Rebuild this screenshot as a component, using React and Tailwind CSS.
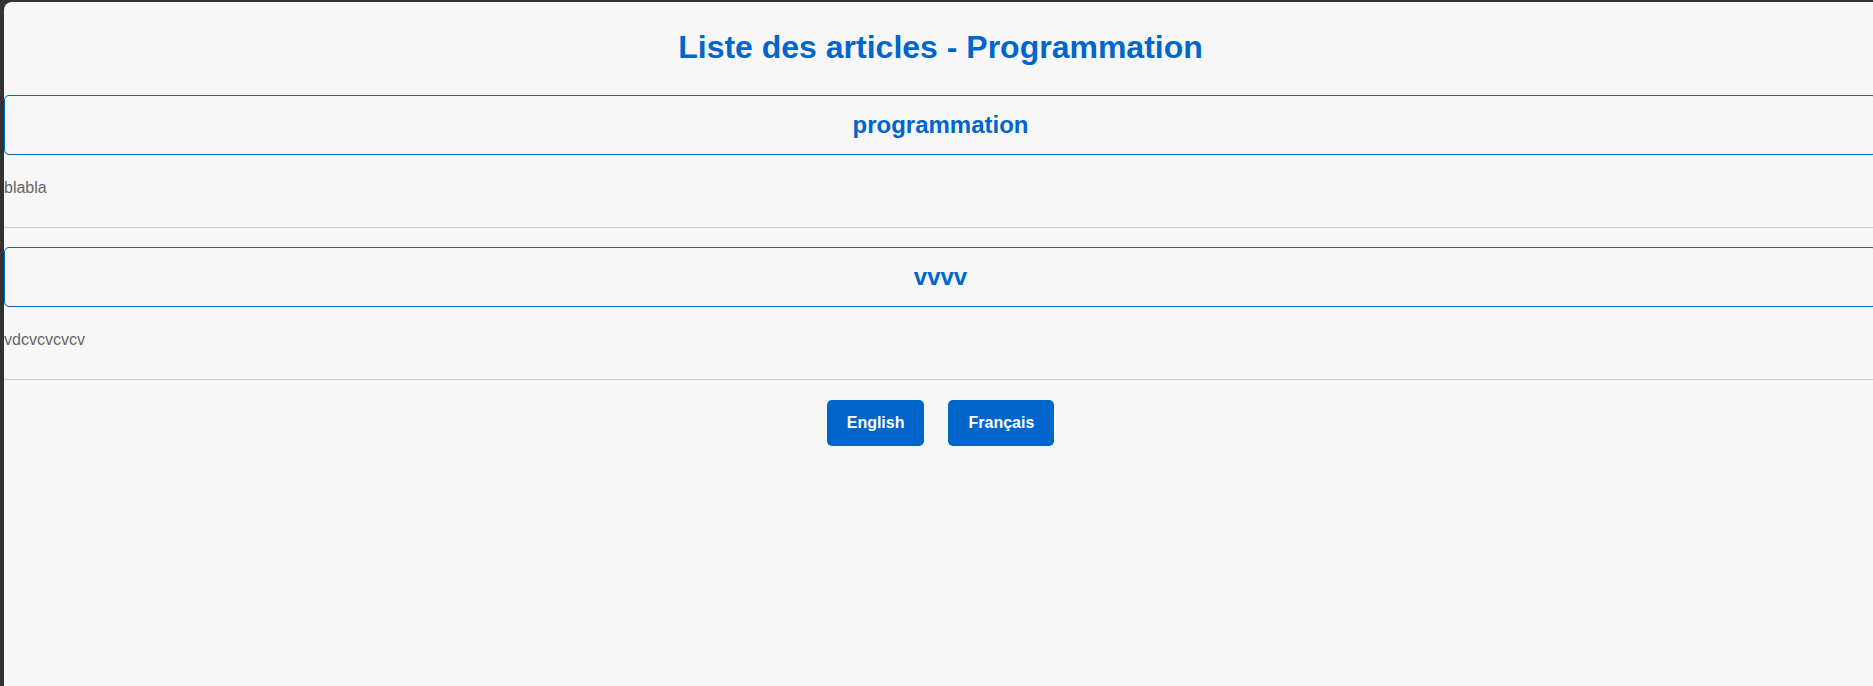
import React from "react";

const articles = [
  { title: "programmation", body: "blabla" },
  { title: "vvvv", body: "vdcvcvcvcv" },
];

export default function App() {
  return (
    <div className="min-h-screen overflow-hidden bg-[#333333] pl-1 pt-[2px] font-['Liberation_Sans',Arial,sans-serif]">
      <div className="w-[calc(100%+4px)] min-h-[684px] bg-[#f7f7f7] rounded-tl-lg">
        {/* Header */}
        <h1 className="pt-[25px] pb-[28px] text-center text-[32px] leading-[40px] font-bold text-[#0066cc]">
          Liste des articles - Programmation
        </h1>

        {/* Articles */}
        {articles.map((a) => (
          <article key={a.title} className="mb-[19px] border-b border-[#cccccc] pb-[27px]">
            <h2 className="h-[60px] flex items-center justify-center border border-[#0066cc] rounded-[5px] text-[24px] font-bold text-[#0066cc]">
              {a.title}
            </h2>
            <p className="mt-[21px] text-[16px] leading-[24px] text-[#666666]">{a.body}</p>
          </article>
        ))}

        {/* Language switch */}
        <div className="flex justify-center gap-6 pt-[1px]">
          <button className="bg-[#0066cc] text-white font-bold text-[16px] leading-[18px] px-5 py-[14px] rounded-[5px]">
            English
          </button>
          <button className="bg-[#0066cc] text-white font-bold text-[16px] leading-[18px] px-5 py-[14px] rounded-[5px]">
            Français
          </button>
        </div>
      </div>
    </div>
  );
}
